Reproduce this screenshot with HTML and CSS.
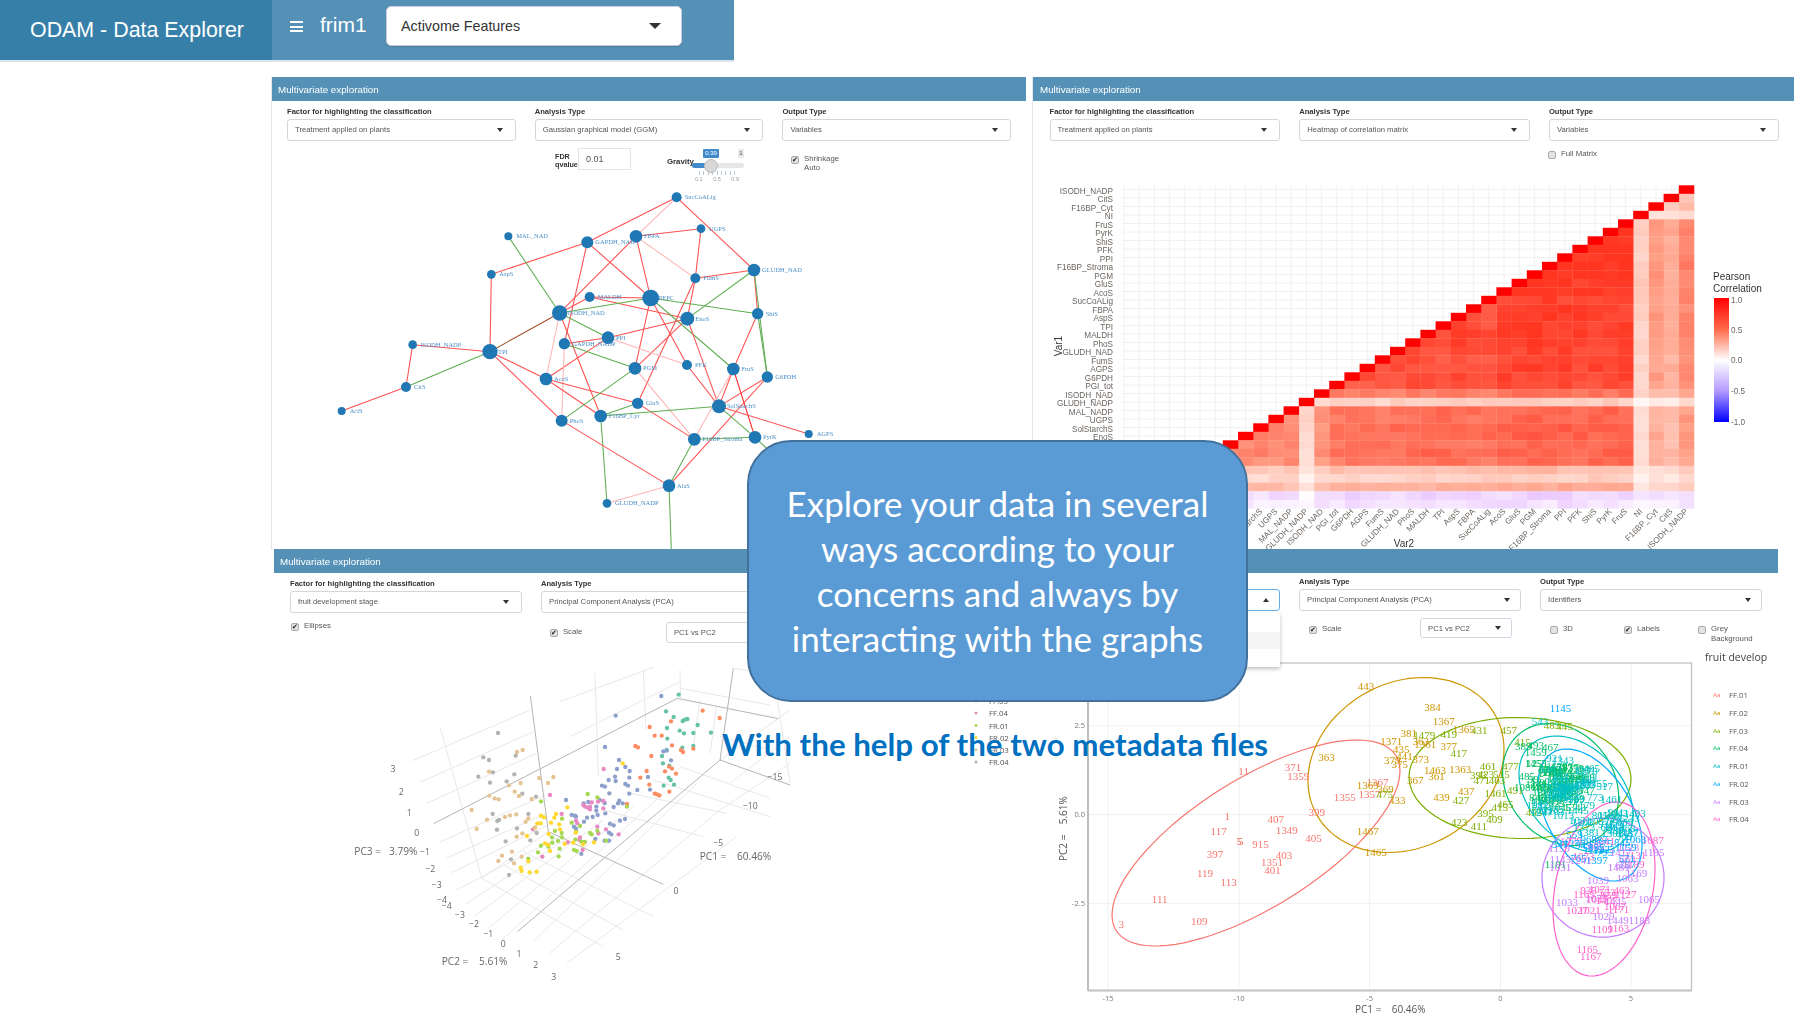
FILE: index.html
```html
<!DOCTYPE html>
<html lang="en">
<head>
<meta charset="utf-8">
<title>ODAM - Data Explorer</title>
<link rel="stylesheet" href="styles.css">
</head>
<body>
<header class="topbar">
  <div class="logo">ODAM - Data Explorer</div>
  <nav class="navbar">
    <span class="burger"><i></i><i></i><i></i></span>
    <span class="subset">frim1</span>
    <div class="top-select">Activome Features<i class="caret big"></i></div>
  </nav>
</header>

<main class="slide">
  <section class="panel p1">
    <svg class="chart" id="net" viewBox="272 77 754 473"></svg>
    <h2 class="panel-head">Multivariate exploration</h2>
    <div class="form-row">
      <div class="field"><label>Factor for highlighting the classification</label><div class="select">Treatment applied on plants<i class="caret"></i></div></div>
      <div class="field"><label>Analysis Type</label><div class="select">Gaussian graphical model (GGM)<i class="caret"></i></div></div>
      <div class="field"><label>Output Type</label><div class="select">Variables<i class="caret"></i></div></div>
    </div>
    <div class="ggm-row">
      <div class="fdr"><b>FDR<br>qvalue</b><div class="num-input">0.01</div></div>
      <div class="gravity">
        <b>Gravity</b>
        <div class="slider">
          <span class="tip">0.39</span><span class="tip-max">1</span>
          <span class="track"></span><span class="fill"></span><span class="handle"></span>
          <span class="ticks"><i></i><i></i><i></i><i></i><i></i><i></i><i></i><i></i><i></i></span>
          <span class="scale"><em>0.1</em><em>0.5</em><em>0.9</em></span>
        </div>
      </div>
      <div class="check shrink"><span class="cb on"></span><span>Shrinkage<br>Auto</span></div>
    </div>
  </section>

  <section class="panel p2">
    <svg class="chart" id="heat" viewBox="1033 77 761 472"></svg>
    <h2 class="panel-head">Multivariate exploration</h2>
    <div class="form-row">
      <div class="field"><label>Factor for highlighting the classification</label><div class="select">Treatment applied on plants<i class="caret"></i></div></div>
      <div class="field"><label>Analysis Type</label><div class="select">Heatmap of correlation matrix<i class="caret"></i></div></div>
      <div class="field"><label>Output Type</label><div class="select">Variables<i class="caret"></i></div></div>
    </div>
    <div class="check full"><span class="cb"></span><span>Full Matrix</span></div>
    <div class="colorbar"></div>
  </section>

  <section class="panel p3">
    <svg class="chart" id="scatter" viewBox="274 549 756 466"></svg>
    <h2 class="panel-head">Multivariate exploration</h2>
    <div class="form-row">
      <div class="field"><label>Factor for highlighting the classification</label><div class="select">fruit development stage<i class="caret"></i></div></div>
      <div class="field"><label>Analysis Type</label><div class="select">Principal Component Analysis (PCA)<i class="caret"></i></div></div>
    </div>
    <div class="opts-3">
      <div class="check"><span class="cb on"></span><span>Ellipses</span></div>
      <div class="check scale-opt"><span class="cb on"></span><span>Scale</span></div>
      <div class="select pc">PC1 vs PC2<i class="caret"></i></div>
    </div>
  </section>

  <section class="panel p4">
    <svg class="chart" id="pca" viewBox="1030 549 748 466"></svg>
    <h2 class="panel-head">Multivariate exploration</h2>
    <div class="form-row">
      <div class="field open"><label>Factor for highlighting the classification</label><div class="select">fruit development stage<i class="caret up"></i></div>
        <div class="menu"><span></span><span class="hover"></span><span></span></div>
      </div>
      <div class="field"><label>Analysis Type</label><div class="select">Principal Component Analysis (PCA)<i class="caret"></i></div></div>
      <div class="field"><label>Output Type</label><div class="select">Identifiers<i class="caret"></i></div></div>
    </div>
    <div class="opts-4">
      <div class="check"><span class="cb on"></span><span>Scale</span></div>
      <div class="select pc">PC1 vs PC2<i class="caret"></i></div>
      <div class="check d3"><span class="cb"></span><span>3D</span></div>
      <div class="check labels"><span class="cb on"></span><span>Labels</span></div>
      <div class="check grey"><span class="cb"></span><span>Grey<br>Background</span></div>
    </div>
  </section>

  <div class="callout">Explore your data in several<br>ways according to your<br>concerns and always by<br>interacting with the graphs</div>
  <p class="metadata">With the help of the two metadata files</p>
</main>
<script src="charts.js"></script>
</body>
</html>
```
FILE: styles.css
```css
* { box-sizing: border-box; }
html, body { margin: 0; height: 100%; overflow: hidden; background: #fff; }
body { font-family: "Liberation Sans", Arial, sans-serif; width: 1794px; height: 1015px; position: relative; }

/* top bar */
.topbar { display: flex; width: 734px; height: 62px; border-bottom: 2px solid #dbe6ef; }
.logo { width: 272px; background: #367fa9; color: #fff; font-size: 21.4px; padding: 18px 0 0 30px; white-space: nowrap; }
.navbar { flex: 1; background: #5591b7; display: flex; align-items: flex-start; }
.burger { display: flex; flex-direction: column; gap: 2.5px; margin: 21px 17px 0 18px; width: 13px; }
.burger i { height: 2px; background: #fff; }
.subset { color: #fff; font-size: 21px; margin-top: 13px; width: 66px; }
.top-select { margin-top: 6px; width: 296px; height: 40px; background: #fff; border: 1px solid #ccd; border-radius: 5px; font-size: 14.3px; color: #333; padding: 11px 14px; position: relative; box-shadow: 0 1px 1px rgba(0,0,0,.15); }

.caret { position: absolute; right: 12px; top: 50%; margin-top: -2px; width: 0; height: 0; border-left: 3.5px solid transparent; border-right: 3.5px solid transparent; border-top: 4px solid #333; }
.caret.up { border-top: 0; border-bottom: 4px solid #333; }
.caret.big { right: 20px; margin-top: -3px; border-left-width: 6px; border-right-width: 6px; border-top-width: 6px; }

/* windows on the slide */
.slide { position: absolute; inset: 0; pointer-events: none; }
.panel { position: absolute; background: #fff; filter: blur(.3px); }
.p1 { left: 271px; top: 77px; width: 755px; height: 473px; border-left: 1px solid #e3e8ec; }
.p2 { left: 1032px; top: 77px; width: 762px; height: 472px; border-left: 1px solid #e3e8ec; }
.p3 { left: 274px; top: 549px; width: 756px; height: 466px; }
.p4 { left: 1030px; top: 549px; width: 748px; height: 466px; }
.chart { position: absolute; left: 0; top: 0; width: 100%; height: 100%; }
.panel-head { position: relative; margin: 0; height: 23.5px; line-height: 25px; background: #5591b7; color: #fff; font-size: 9.8px; font-weight: 400; padding-left: 6px; }
.p2 .panel-head { padding-left: 7px; }

.form-row { position: relative; display: flex; gap: 19.2px; padding: 5px 0 0 15px; }
.field { position: relative; width: 228.5px; }
.field label { display: block; font-size: 7.6px; font-weight: 700; color: #333; height: 13.5px; line-height: 11px; white-space: nowrap; }
.select { position: relative; height: 21.5px; line-height: 19px; background: #fff; border: 1px solid #d2d6de; border-radius: 3px; font-size: 7.7px; color: #555; padding-left: 7px; white-space: nowrap; }

.p2 .field { width: 230.5px; }
.p2 .form-row { padding-left: 16.5px; }
.p3 .form-row { gap: 19.5px; padding-left: 16px; }
.p3 .field { width: 231.5px; }
.p4 .form-row { gap: 19px; padding: 3px 0 0 19px; }
.p4 .field { width: 222px; }
.p4 .field.open { width: 231px; }
.p4 .caret { right: 10px; }
.open .select { border-color: #66afe9; }
.menu { position: absolute; left: 0; right: 0; top: 37px; height: 54px; background: #fff; padding-top: 3px; box-shadow: 0 2px 4px rgba(0,0,0,.25); }
.menu span { display: block; height: 16.5px; }
.menu .hover { background: #f5f5f5; }

.check { position: relative; display: flex; gap: 5px; font-size: 7.8px; color: #555; line-height: 9px; }
.cb { flex: none; width: 8px; height: 8px; margin-top: 2px; background: #e2e2e2; border: 1px solid #aaa; border-radius: 2px; position: relative; }
.cb.on::after { content: "\2714"; position: absolute; left: 0; top: -1px; font: 7px/8px "DejaVu Sans", sans-serif; color: #222; }

/* panel 1 controls */
.ggm-row { position: relative; display: flex; align-items: flex-start; padding: 7px 0 0 283px; }
.fdr { display: flex; width: 112px; font-size: 7.2px; color: #333; line-height: 8.5px; }
.fdr b { width: 23px; padding-top: 5px; white-space: nowrap; }
.num-input { width: 53px; height: 22px; border: 1px solid #e2e4e8; color: #555; font-size: 9px; line-height: 20px; padding-left: 7px; }
.gravity { display: flex; width: 124px; }
.gravity b { font-size: 7.8px; color: #333; width: 25px; padding-top: 9px; }
.slider { position: relative; width: 52px; height: 34px; }
.slider span { position: absolute; }
.tip, .tip-max { top: 1px; height: 9px; font-size: 6px; line-height: 9px; text-align: center; border-radius: 1px; }
.tip { left: 11px; width: 16px; background: #428bca; color: #fff; }
.tip-max { left: 46px; width: 6px; background: #e8e8e8; color: #444; }
.track { left: 0; top: 15px; width: 52px; height: 5px; border-radius: 3px; background: #e6e6e6; }
.fill { left: 0; top: 15px; width: 19px; height: 5px; border-radius: 3px 0 0 3px; background: #428bca; }
.handle { left: 12px; top: 11px; width: 14px; height: 14px; border-radius: 50%; background: #d8d8d8; border: 1px solid #bbb; }
.ticks { left: 7px; top: 23px; width: 36px; height: 4px; display: flex; justify-content: space-between; }
.ticks i { width: 1px; background: #b9c6d4; }
.scale { left: 3px; top: 28px; width: 44px; display: flex; justify-content: space-between; font-size: 5.5px; color: #999; }
.scale em { font-style: normal; }
.shrink { margin-top: 6px; }

.full { position: absolute; left: 515px; top: 72px; }
.colorbar { position: absolute; left: 681px; top: 221px; width: 15px; height: 124px; background: linear-gradient(#ff0000, #ff6a48 25%, #fff 50%, #b49bff 75%, #0000ff); }

.opts-3 { position: relative; display: flex; align-items: flex-start; padding: 8px 0 0 17px; }
.opts-3 .scale-opt { margin: 6px 0 0 219px; width: 116px; }
.opts-3 .pc { width: 100px; margin-top: 1px; }
.opts-4 { position: relative; display: flex; align-items: flex-start; padding: 7.5px 0 0 279px; }
.opts-4 > .check { margin-top: 6px; }
.opts-4 > .check:first-child { width: 111px; }
.opts-4 .pc { width: 92px; height: 20px; }
.opts-4 .d3 { margin-left: 38px; width: 74px; }
.opts-4 .labels { width: 74px; }
.opts-4 .grey { line-height: 9.5px; }

/* chart text */
.net-label { font: 19.5px "Liberation Serif", serif; fill: #4c8fc6; }
.heat-label { font: 8.2px "Liberation Sans", sans-serif; fill: #6b6560; }
.axis-title { font: 10px "Liberation Sans", sans-serif; fill: #333; }
.d3-tick { font: 26px "Open Sans", sans-serif; fill: #666; text-anchor: middle; white-space: pre; }
.d3-title { font: 30.5px "Open Sans", sans-serif; fill: #666; white-space: pre; }
.legend { font: 7.8px "Open Sans", sans-serif; fill: #555; }
.pca-label { font: 11px "Liberation Serif", serif; text-anchor: middle; }
.pca-tick { font: 7.5px "Open Sans", sans-serif; fill: #777; }
.pca-title { font: 10px "Open Sans", sans-serif; fill: #555; white-space: pre; }
.aa { font: 6px "Liberation Sans", sans-serif; }
.group-title { font: 10.5px "Open Sans", sans-serif; fill: #444; }

/* overlay */
.callout { position: absolute; left: 747px; top: 440px; width: 501px; height: 262px; display: flex; align-items: center; justify-content: center; text-align: center; background: #5b9bd5; border: 2px solid #41719c; border-radius: 44px; color: #fff; font: 35px/45px Lato, "Open Sans", sans-serif; }
.metadata { position: absolute; left: 722px; top: 725px; margin: 0; color: #0070c0; font: 700 31.3px/38px Lato, "Open Sans", sans-serif; white-space: nowrap; }
```
FILE: charts.js
```js
const NS = "http://www.w3.org/2000/svg";
function el(parent, tag, attrs, text) {
  const n = document.createElementNS(NS, tag);
  for (const k in attrs) n.setAttribute(k, attrs[k]);
  if (text !== undefined) n.textContent = text;
  parent.appendChild(n);
  return n;
}
function rng(seed) {
  return function () {
    seed = (seed + 0x6D2B79F5) | 0;
    let t = Math.imul(seed ^ (seed >>> 15), 1 | seed);
    t = (t + Math.imul(t ^ (t >>> 7), 61 | t)) ^ t;
    return ((t ^ (t >>> 14)) >>> 0) / 4294967296;
  };
}

/* ---------- correlation network (coordinates at 3x) ---------- */
(function () {
  const svg = document.getElementById("net");
  const g = el(svg, "g", { transform: "translate(320 170) scale(.33333)" });
  const N = {
    SucCoALig: [1070, 82, 15], UGPS: [1143, 176, 13], FBPA: [948, 199, 19], GAPDH_NAD: [802, 217, 18],
    MAL_NAD: [565, 199, 12], AspS: [514, 313, 13], GLUDH_NAD: [1302, 300, 19], FumS: [1126, 325, 15],
    MALDH: [809, 381, 15], PEPC: [992, 384, 25], ISODH_NAD: [719, 429, 23], EnoS: [1102, 446, 21],
    ShiS: [1313, 431, 17], PPI: [864, 503, 19], GAPDH_NADP: [733, 521, 17], TPI: [510, 545, 23],
    ISODH_NADP: [278, 524, 13], PFK: [1101, 585, 15], PGM: [945, 595, 19], FruS: [1240, 597, 19],
    G6PDH: [1342, 621, 17], AcoS: [678, 627, 19], CitS: [258, 651, 15], GluS: [953, 700, 17],
    SolStarchS: [1197, 709, 21], F16BP_Cyt: [842, 738, 19], PhoS: [725, 752, 18], AciS: [65, 723, 12],
    F16BP_Stroma: [1123, 808, 19], PyrK: [1305, 802, 19], AGPS: [1466, 792, 12], AlaS: [1047, 947, 19],
    GLUDH_NADP: [861, 1000, 13]
  };
  const R = "#ff5050", P = "#ffb4b4", G = "#5fae52", D = "#a5502a";
  const E = [
    ["SucCoALig","GAPDH_NAD",R],["SucCoALig","FBPA",P],["SucCoALig","GLUDH_NAD",R],["FBPA","UGPS",R],["FBPA","FumS",P],
    ["FBPA","PEPC",R],["FBPA","ISODH_NAD",R],["GAPDH_NAD","AspS",R],["GAPDH_NAD","PEPC",R],["GAPDH_NAD","GAPDH_NADP",R],
    ["MAL_NAD","ISODH_NAD",G],["AspS","TPI",R],["UGPS","FumS",R],["FumS","GLUDH_NAD",R],["FumS","EnoS",R],["FumS","GluS",R],
    ["GLUDH_NAD","EnoS",G],["GLUDH_NAD","ShiS",R],["GLUDH_NAD","G6PDH",G],["MALDH","PEPC",R],["MALDH","EnoS",R],["MALDH","ISODH_NAD",R],
    ["PEPC","ISODH_NAD",G],["PEPC","ShiS",G],["PEPC","FruS",G],["PEPC","PGM",R],["PEPC","PFK",R],["EnoS","PPI",R],["EnoS","PGM",R],
    ["EnoS","SolStarchS",R],["ISODH_NAD","PPI",G],["ISODH_NAD","TPI",D],["ISODH_NAD","AcoS",P],["ISODH_NAD","F16BP_Cyt",R],
    ["PPI","GAPDH_NADP",R],["PPI","PFK",P],["PPI","AcoS",R],["GAPDH_NADP","PGM",G],["GAPDH_NADP","PhoS",P],["TPI","ISODH_NADP",R],
    ["TPI","CitS",G],["TPI","AcoS",R],["TPI","PhoS",R],["ISODH_NADP","CitS",R],["CitS","AciS",R],["AcoS","GluS",R],["AcoS","F16BP_Cyt",R],
    ["PGM","PhoS",G],["PGM","F16BP_Stroma",P],["GluS","F16BP_Cyt",G],["GluS","F16BP_Stroma",R],["F16BP_Cyt","SolStarchS",G],
    ["F16BP_Cyt","GLUDH_NADP",G],["PhoS","AlaS",R],["PFK","SolStarchS",R],["FruS","ShiS",R],["FruS","SolStarchS",R],["FruS","F16BP_Stroma",P],
    ["FruS","PyrK","#ff2a2a"],["G6PDH","SolStarchS",R],["G6PDH","AlaS",R],["SolStarchS","PyrK",G],["SolStarchS","AGPS",R],
    ["F16BP_Stroma","PyrK",G],["F16BP_Stroma","AlaS",G],["AlaS","GLUDH_NADP",P],["ShiS","G6PDH",G]
  ];
  E.forEach(([a, b, c]) => el(g, "line", { x1: N[a][0], y1: N[a][1], x2: N[b][0], y2: N[b][1], stroke: c, "stroke-width": 3.2 }));
  el(g, "line", { x1: 1047, y1: 947, x2: 1054, y2: 1140, stroke: G, "stroke-width": 3.2 });
  el(g, "line", { x1: 1305, y1: 802, x2: 1345, y2: 840, stroke: G, "stroke-width": 3.2 });
  for (const name in N) {
    const [x, y, r] = N[name];
    el(g, "circle", { cx: x, cy: y, r: r, fill: "#1f77b4" });
  }
  for (const name in N) {
    const [x, y] = N[name];
    el(g, "text", { x: x + 24, y: y + 6, class: "net-label" }, name);
  }
})();

/* ---------- correlation heatmap (page coordinates) ---------- */
(function () {
  const svg = document.getElementById("heat");
  const right = 1694, top = 185.3, cw = 15.2, rh = 8.5, n = 38;
  const names = ["ISODH_NADP","CitS","F16BP_Cyt","NI","FruS","PyrK","ShiS","PFK","PPI","F16BP_Stroma","PGM","GluS","AcoS","SucCoALig","FBPA","AspS","TPI","MALDH","PhoS","GLUDH_NAD","FumS","AGPS","G6PDH","PGI_tot","ISODH_NAD","GLUDH_NADP","MAL_NADP","UGPS","SolStarchS","EnoS"];
  for (let i = 0; i < n; i++) {
    const x = right - cw * (i + .5), y = top + rh * (i + .5);
    el(svg, "line", { x1: x, x2: x, y1: top, y2: top + rh * n, stroke: "#f1f1f1", "stroke-width": 1 });
    el(svg, "line", { x1: 1122, x2: right, y1: y, y2: y, stroke: "#f1f1f1", "stroke-width": 1 });
  }
  const s = [.66, .46, .55, .27, .95, .95, .94, .94, .96, .96, .96, .94, .95, .89, .9, .91, .91, .92, .92, .89, .87, .89, .89, .87, .7, .27, .76, .76, .78, .78, .75, .77, .74, .38, .27, .46, -.14, -.1];
  const rand = rng(11);
  function colour(v) {
    v = Math.max(-1, Math.min(1, v));
    let r = 255, g, b;
    if (v >= 0) {
      if (v < .5) { const t = v / .5; g = 255 - 95 * t; b = 255 - 120 * t; }
      else if (v < .92) { const t = (v - .5) / .42; g = 160 - 110 * t; b = 135 - 105 * t; }
      else { const t = (v - .92) / .08; g = 50 - 50 * t; b = 30 - 30 * t; }
    } else {
      const t = -v;
      b = 255;
      g = 255 - 230 * Math.pow(t, .85);
      r = 255 - 110 * t;
    }
    return "rgb(" + [r, g, b].map(Math.round).join(",") + ")";
  }
  for (let r = 0; r < n; r++) {
    for (let c = 0; c <= r; c++) {
      const v = r === c ? 1 : Math.min(.91, s[r] * s[c] + (rand() - .5) * .1);
      el(svg, "rect", { x: right - cw * (c + 1), y: top + rh * r, width: cw + .3, height: rh + .3, fill: colour(v) });
    }
  }
  names.forEach((nm, i) => {
    el(svg, "text", { x: 1113, y: top + rh * (i + .5) + 4, "text-anchor": "end", class: "heat-label" }, nm);
    const cx = right - cw * (i + .5) + 2, cy = 512;
    el(svg, "text", { x: cx, y: cy, "text-anchor": "end", transform: "rotate(-45 " + cx + " " + cy + ")", class: "heat-label" }, nm);
  });
  el(svg, "text", { x: 1062, y: 346, transform: "rotate(-90 1062 346)", "text-anchor": "middle", class: "axis-title" }, "Var1");
  el(svg, "text", { x: 1404, y: 547, "text-anchor": "middle", class: "axis-title" }, "Var2");
  el(svg, "text", { x: 1713, y: 280, class: "axis-title" }, "Pearson");
  el(svg, "text", { x: 1713, y: 292, class: "axis-title" }, "Correlation");
  [["1.0", 303], ["0.5", 333], ["0.0", 363], ["-0.5", 394], ["-1.0", 425]].forEach(([t, y]) =>
    el(svg, "text", { x: 1731, y: y, class: "heat-label" }, t));
})();

/* ---------- 3D PCA scatter (coordinates at 3x) ---------- */
(function () {
  const svg = document.getElementById("scatter");
  const g = el(svg, "g", { transform: "translate(270 550) scale(.33333)" });
  const grid = [
    [428,632,781,480],[450,697,790,545],[470,760,800,610],[510,876,826,735],[528,925,830,790],[545,968,835,825],
    [510,530,635,985],[635,985,835,845],[635,985,1000,1190],
    [558,1020,870,860],[585,1063,930,840],[612,1100,1000,810],[655,1135,1090,770],[695,1170,1180,730],[790,1175,1280,700],[838,1210,1350,780],[890,1240,1400,860],
    [700,945,1060,1140],[760,905,1150,1100],[1000,780,1300,860],[1080,730,1370,790],[1150,690,1500,800],[1230,650,1500,745],
    [975,370,985,680],[1120,360,1128,540],[1230,360,1232,445],[1150,352,870,455],[1230,395,900,560],[1390,355,1500,370],[1230,415,1500,465],[1350,560,1500,600],[1290,450,1270,590],[1340,470,1320,610],
    [1500,300,1560,700],[1350,630,1560,480],[1380,700,1560,560],[1350,780,1560,640]
  ];
  grid.forEach(l => el(g, "line", { x1: l[0], y1: l[1], x2: l[2], y2: l[3], stroke: "#e8e8e8", "stroke-width": 3 }));
  [[781,437,835,845],[491,821,1222,445],[1222,445,1525,506],[1390,355,1350,630],[835,845,1180,1003],[742,1145,1350,630],[1350,630,1560,705]]
    .forEach(l => el(g, "line", { x1: l[0], y1: l[1], x2: l[2], y2: l[3], stroke: "#b5b5b5", "stroke-width": 3 }));
  const P = {
    "#66c2a5": [1226,434,1188,484,1211,501,1238,513,1245,509,1252,507,1283,525,1191,534,1229,542,1242,550,1270,549,1323,548,1192,566,1237,593,1270,588,1190,600,1176,618,1179,640,1198,647,1202,690,1181,707,1212,704,1196,683],
    "#fc8d62": [1298,482,1349,504,1203,514,1139,531,1154,557,1175,557,1206,586,1096,588,1104,592,1233,600,1239,606,1270,596,1144,618,1130,663,1111,683,1138,704,1185,664,1197,650,1206,656,1218,671,1154,731,1161,733,1168,736,1198,725,1071,762],
    "#8da0cb": [1174,438,1037,497,1005,591,1180,604,1190,602,1203,631,1047,630,1041,657,1066,651,1079,663,1078,683,1134,681,1035,680,1016,690,1037,693,996,707,1005,710,1066,702,1074,707,1102,720,1140,719,1018,730,1078,731,888,750,941,760,955,756,979,770,989,750,1004,759,1031,771,1048,752,1044,760,1058,760,1006,790,979,782,983,795,968,801,951,803,942,815,905,795,915,797,918,800,912,830,918,836,1020,821,1031,826,1050,812,1065,807,1017,848,1024,853,1017,872,1004,872,976,867,934,912],
    "#e78ac3": [1001,657,840,735,945,770,953,773,960,770,940,765,965,757,984,755,1000,753,1000,775,960,778,875,792,918,812,922,820,789,838,982,830,1008,838,985,850,1046,853,930,862,893,877,928,870,817,920,938,900],
    "#a6d854": [813,754,953,732,982,742,1071,770,876,806,905,818,930,828,875,849,855,843,846,862,876,862,918,845,916,868,960,849,965,853,1008,872,847,878,864,873,835,890,813,887,804,907,869,896,912,900,920,903,945,876,940,876,866,919,775,926,982,843,934,875],
    "#ffd92f": [1058,640,892,772,858,792,853,803,813,797,822,802,802,820,812,820,843,818,868,823,795,833,836,852,771,858,917,848,825,880,835,885,884,882,910,878,972,877,939,883,840,903,775,934,752,953,779,967,800,965,755,963,870,838],
    "#e5c494": [758,600,741,606,657,665,850,681,808,684,834,699,752,699,717,706,734,725,747,738,658,737,674,745,686,748,785,747,605,780,651,809,705,801,720,796,739,793,775,805,767,815,620,837,757,850,740,860,696,917,726,905,685,933,732,940,755,920,795,832],
    "#b3b3b3": [684,549,640,622,657,630,737,617,669,667,625,680,660,698,733,673,710,694,757,731,798,740,668,792,687,810,682,813,775,792,741,835,681,839,800,849,781,871,707,874,723,928,717,975]
  };
  for (const c in P) for (let i = 0; i < P[c].length; i += 2)
    el(g, "circle", { cx: P[c][i], cy: P[c][i + 1], r: 6.5, fill: c });
  [["3",369,656],["2",394,725],["1",418,789],["0",440,848],["\u22121",465,905],["\u22122",481,956],["\u22123",500,1004],["\u22124",516,1050],["\u22124",530,1068],["\u22123",570,1094],["\u22122",612,1122],["\u22121",655,1151],["0",700,1181],["1",747,1213],["2",797,1246],["3",851,1281],["5",1045,1222],["0",1218,1022],["\u22125",1345,878],["\u221210",1441,768],["\u221215",1515,681]]
    .forEach(([t, x, y]) => el(g, "text", { x: x, y: y + 9, class: "d3-tick" }, t));
  el(g, "text", { x: 253, y: 915, class: "d3-title" }, "PC3 =   3.79%");
  el(g, "text", { x: 515, y: 1246, class: "d3-title" }, "PC2 =    5.61%");
  el(g, "text", { x: 1289, y: 930, class: "d3-title" }, "PC1 =    60.46%");
  [["FF.03","#bbb",701],["FF.04","#e78ac3",713],["FR.01","#a6d854",725.5],["FR.02","#ffd92f",737.5],["FR.03","#e5c494",749.7],["FR.04","#b3b3b3",762]].forEach(([t, c, y]) => {
    el(svg, "circle", { cx: 976, cy: y, r: 1.5, fill: c });
    el(svg, "text", { x: 989, y: y + 3, class: "legend" }, t);
  });
})();

/* ---------- 2D PCA with ellipses (page coordinates) ---------- */
(function () {
  const svg = document.getElementById("pca");
  const L = 1088, B = 990.5, T = 663, Rt = 1691.5;
  [1108, 1239, 1369.6, 1500.5, 1631].forEach(x => el(svg, "line", { x1: x, x2: x, y1: T, y2: B, stroke: "#f0f0f0" }));
  [725.8, 814.5, 903.3].forEach(y => el(svg, "line", { x1: L, x2: Rt, y1: y, y2: y, stroke: "#f0f0f0" }));
  el(svg, "rect", { x: L, y: T, width: Rt - L, height: B - T, fill: "none", stroke: "#bdbdbd", "stroke-width": 1.2 });
  el(svg, "line", { x1: L, x2: L, y1: T, y2: B, stroke: "#bbb", "stroke-width": 1.8 });
  el(svg, "line", { x1: L, x2: Rt, y1: B, y2: B, stroke: "#c4c4c4", "stroke-width": 1.8 });
  const C = { r: "#F8766D", g: "#CD9600", o: "#7CAE00", e: "#00BE67", t: "#00BFC4", b: "#00A9FF", p: "#C77CFF", m: "#FF61CC" };
  function ell(cx, cy, X, Y, rho, c) {
    const phi = Math.acos(rho); let d = "";
    for (let i = 0; i <= 90; i++) {
      const a = i / 90 * 2 * Math.PI;
      d += (i ? "L" : "M") + (cx + X * Math.cos(a)).toFixed(1) + " " + (cy + Y * Math.cos(a - phi)).toFixed(1);
    }
    el(svg, "path", { d: d + "Z", fill: "none", stroke: c, "stroke-width": 1.2 });
  }
  ell(1256, 843, 144, 103, -.7, C.r);
  ell(1406, 765, 98, 87.5, -.18, C.g);
  ell(1520, 778, 111, 60.5, .02, C.o);
  ell(1560.6, 784.5, 58, 61, .2, C.e);
  ell(1576, 794, 57, 58, .35, C.t);
  ell(1590, 815, 52, 66, .45, C.b);
  ell(1603, 877.6, 61, 59.5, 0, C.p);
  ell(1604, 889, 51, 87, -.24, C.m);
  const zx = x => x / 2.78 + 1230, zy = y => y / 3 + 660;
  function lab(t, x, y, c) { el(svg, "text", { x: x, y: y + 3.5, class: "pca-label", fill: c }, t); }
  function list(arr, c) { for (let i = 0; i < arr.length; i += 3) lab(arr[i], zx(arr[i + 1]), zy(arr[i + 2]), c); }
  [["1",1462,500],["117",1436,545],["5",1497,575],["397",1425,612],["119",1395,671],["113",1466,697],["111",1259,749],["3",1144,824],["109",1378,815]]
    .forEach(([t, x, y]) => lab(t, x / 3 + 740, y / 3 + 650, C.r));
  list(["11",38,334,"371",175,321,"1359",190,349,"407",127,478,"1349",158,511,"405",232,534,"5",30,545,"915",85,553,"403",150,587,"1351",117,608,"401",118,631,"1355",319,413,"1367",410,368,"399",241,458,"1357",388,402], C.r);
  list(["443",378,80,"384",563,143,"1367",594,183,"1365",650,209,"381",497,221,"1371",448,244,"363",530,245,"1361",543,254,"377",608,260,"435",476,267,"441",485,288,"373",530,297,"379",451,301,"375",472,314,"363",268,292,"1369",383,375,"369",432,388,"433",465,422,"1463",570,332,"361",574,349,"1363",640,327,"367",515,360,"437",657,395,"439",588,413,"1467",383,515,"1465",405,578], C.g);
  list(["1479",540,226,"419",608,224,"431",693,212,"457",775,212,"417",636,281,"461",717,318,"427",642,420,"423",637,488,"411",692,499,"409",735,478,"395",710,459,"415",750,441,"465",765,433,"1461",738,401,"491",793,392,"471",700,360,"463",742,360,"393",690,346,"423",712,343,"515",755,342,"477",780,318,"415",813,247,"483",895,195,"445",930,200,"455",845,458,"475",430,403], C.o);
  list(["389",815,260,"493",850,255,"1459",850,278,"1455",850,310,"1081",820,382,"467",890,262,"485",825,350,"1101",905,612], C.e);
  list(["543",862,185,"517",1042,378,"1405",998,326,"1461",1060,418,"1493",1125,460,"1081",855,435,"1103",900,455,"1179",985,435], C.t);
  list(["1145",919,145,"1119",1068,498,"1137",1105,518,"1111",1010,570], C.b);
  list(["1185",1178,578,"1123",1108,562,"1159",915,565,"1143",918,597,"1031",918,622,"1065",1165,718,"1033",937,728,"1183",1138,780,"1449",1078,780,"1063",1105,655,"1169",1130,640,"1039",1023,660,"1075",1018,715,"1445",1072,725,"1029",1038,768], C.p);
  list(["1073",983,590,"1071",1028,687,"1127",1100,702,"1021",1000,750,"1027",965,752,"1067",1070,738,"1171",1080,748,"1109",1035,808,"1163",1080,806,"1165",993,869,"1167",1003,888,"1087",1175,540,"1131",1127,585,"1189",1122,612,"1079",948,545,"1041",1040,545,"1047",1020,718], C.m);
  const rand = rng(5);
  function cloud(n, x0, x1, y0, y1, c) {
    for (let i = 0; i < n; i++) {
      const t = String(Math.floor(401 + rand() * 1100) | 1);
      lab(t, zx(x0 + (rand() * .6 + rand() * .4) * (x1 - x0)), zy(y0 + (rand() * .6 + rand() * .4) * (y1 - y0)), c);
    }
  }
  cloud(55, 815, 1010, 290, 470, C.e);
  cloud(42, 850, 1050, 290, 480, C.t);
  cloud(22, 950, 1160, 445, 540, C.t);
  cloud(18, 900, 1140, 510, 640, C.b);
  cloud(6, 950, 1160, 520, 660, C.p);
  cloud(6, 950, 1100, 620, 770, C.m);
  [["-15",1108],["-10",1239],["-5",1369.6],["0",1500.5],["5",1631]].forEach(([t, x]) =>
    el(svg, "text", { x: x, y: 1000.5, "text-anchor": "middle", class: "pca-tick" }, t));
  [["2.5",725.8],["0.0",814.5],["-2.5",903.3]].forEach(([t, y]) =>
    el(svg, "text", { x: 1085, y: y + 2.5, "text-anchor": "end", class: "pca-tick" }, t));
  el(svg, "text", { x: 1355, y: 1013, class: "pca-title" }, "PC1 =    60.46%");
  el(svg, "text", { x: 1067, y: 861, transform: "rotate(-90 1067 861)", class: "pca-title" }, "PC2 =    5.61%");
  el(svg, "text", { x: 1705, y: 661, class: "group-title" }, "fruit develop");
  [["FF.01",C.r,695],["FF.02",C.g,713],["FF.03",C.o,730.7],["FF.04",C.e,748],["FR.01",C.t,766],["FR.02",C.b,784],["FR.03",C.p,801.7],["FR.04",C.m,819.3]].forEach(([t, c, y]) => {
    el(svg, "text", { x: 1713, y: y + 2, class: "aa", fill: c }, "Aa");
    el(svg, "text", { x: 1729, y: y + 3, class: "legend" }, t);
  });
})();
```
